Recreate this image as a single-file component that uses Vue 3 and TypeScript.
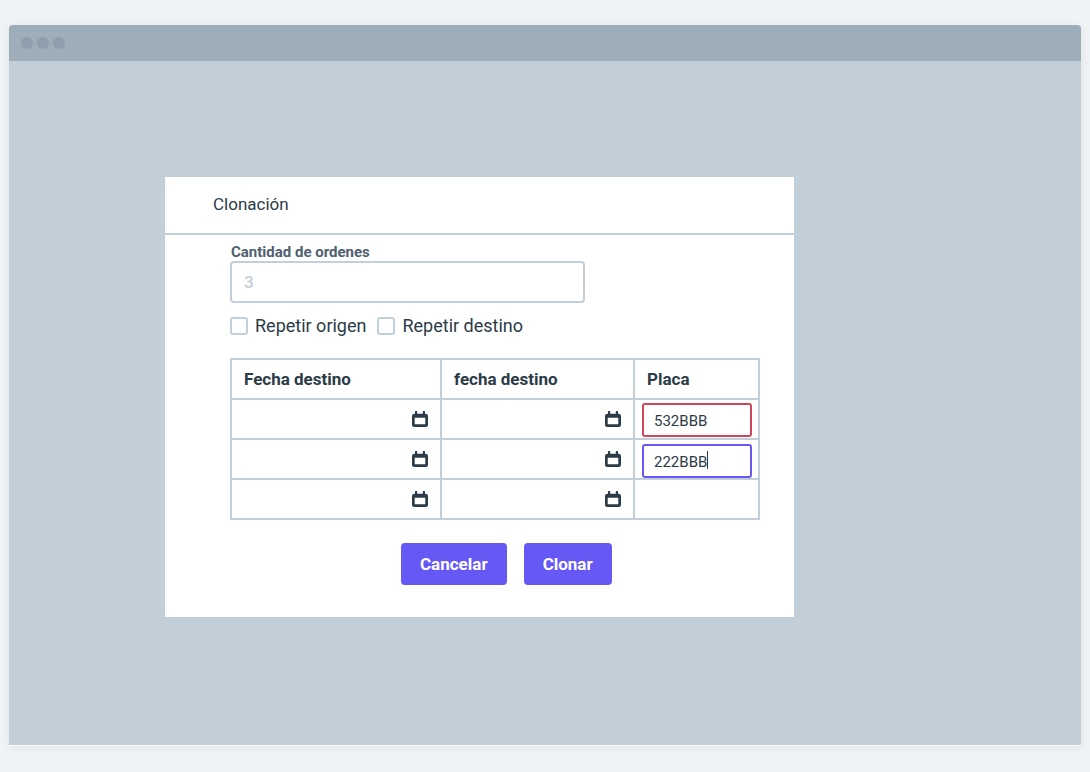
<script setup lang="ts">
import { ref } from 'vue'

interface OrderRow {
  id: number
  origin: string
  destination: string
  plate: string
  state: 'error' | 'active' | 'plain'
}

const quantity = ref('')
const repeatOrigin = ref(false)
const repeatDestination = ref(false)
const rows = ref<OrderRow[]>([
  { id: 1, origin: '', destination: '', plate: '532BBB', state: 'error' },
  { id: 2, origin: '', destination: '', plate: '222BBB', state: 'active' },
  { id: 3, origin: '', destination: '', plate: '', state: 'plain' },
])
const dateFields = ['origin', 'destination'] as const
</script>

<template>
  <div class="page">
    <div class="window">
      <div class="titlebar">
        <span class="dot"></span>
        <span class="dot"></span>
        <span class="dot"></span>
      </div>
      <main class="canvas">
        <section class="dialog" role="dialog" aria-labelledby="dialog-title">
          <header class="dialog-header">
            <h1 id="dialog-title">Clonación</h1>
          </header>
          <form class="dialog-body" @submit.prevent>
            <label class="field-label" for="quantity">Cantidad de ordenes</label>
            <input id="quantity" v-model="quantity" class="quantity" type="text" placeholder="3" />

            <div class="checks">
              <label class="check"><input v-model="repeatOrigin" type="checkbox" />Repetir origen</label>
              <label class="check"><input v-model="repeatDestination" type="checkbox" />Repetir destino</label>
            </div>

            <table class="orders">
              <colgroup>
                <col class="col-origin" />
                <col class="col-destination" />
                <col class="col-plate" />
              </colgroup>
              <thead>
                <tr>
                  <th scope="col">Fecha destino</th>
                  <th scope="col">fecha destino</th>
                  <th scope="col">Placa</th>
                </tr>
              </thead>
              <tbody>
                <tr v-for="row in rows" :key="row.id">
                  <td v-for="field in dateFields" :key="field">
                    <div class="date-cell">
                      <input v-model="row[field]" type="text" :aria-label="`Fecha destino ${row.id}`" />
                      <button type="button" class="calendar" aria-label="Elegir fecha">
                        <svg viewBox="0 0 16 16" width="16" height="16" aria-hidden="true">
                          <path
                            fill="currentColor"
                            fill-rule="evenodd"
                            d="M3 .6Q3 0 3.600 0h1Q5.200 0 5.200 .6V2.800h5.600V.6Q10.800 0 11.400 0h1Q13 0 13 .6V2.800h.5A2.500 2.500 0 0 1 16 5.300v8.200A2.500 2.500 0 0 1 13.500 16h-11A2.500 2.500 0 0 1 0 13.500V5.300A2.500 2.500 0 0 1 2.500 2.800H3zM2.700 6.700v6.500h10.600V6.700z"
                          />
                        </svg>
                      </button>
                    </div>
                  </td>
                  <td>
                    <div class="plate-cell" :class="row.state">
                      <input v-model="row.plate" type="text" :aria-label="`Placa ${row.id}`" />
                      <span v-if="row.state === 'active'" class="caret">{{ row.plate }}</span>
                    </div>
                  </td>
                </tr>
              </tbody>
            </table>

            <div class="actions">
              <button type="button" class="primary">Cancelar</button>
              <button type="submit" class="primary">Clonar</button>
            </div>
          </form>
        </section>
      </main>
    </div>
  </div>
</template>

<style>
body {
  margin: 0;
  background: #eff3f6;
}
</style>

<style scoped>
.page,
.page * {
  box-sizing: border-box;
}

.page {
  display: flex;
  min-height: 100vh;
  padding: 25px 9px 27px;
  background: #eff3f6;
  color: #2c3b48;
  font-family: Roboto, "Liberation Sans", sans-serif;
  font-size: 17px;
  line-height: 20px;
}

input,
button {
  font: inherit;
  color: inherit;
}

.window {
  display: flex;
  flex: 1;
  flex-direction: column;
  border-radius: 4px 4px 0 0;
  background: #c3cfd8;
  box-shadow: 0 1px 0 #f8fafb, 0 2px 10px rgba(0, 0, 0, 0.07);
}

.titlebar {
  display: flex;
  align-items: center;
  gap: 4px;
  height: 36px;
  padding-left: 12px;
  border-radius: 4px 4px 0 0;
  background: #9dadb9;
}

.dot {
  width: 12px;
  height: 12px;
  border-radius: 50%;
  background: #8e9eac;
}

.canvas {
  flex: 1;
  padding: 116px 16px 32px 156px;
}

.dialog {
  max-width: 629px;
  background: #fff;
}

.dialog-header {
  padding: 17px 48px 19px;
  border-bottom: 2px solid #c3cfd8;
}

h1 {
  margin: 0;
  font-size: 17px;
  font-weight: 400;
}

.dialog-body {
  padding: 8px 34px 32px 65px;
}

.field-label {
  display: block;
  padding-left: 1px;
  color: #4f6070;
  font-size: 15px;
  font-weight: 700;
  line-height: 18px;
}

.quantity {
  display: block;
  width: 67%;
  height: 42px;
  padding: 0 12px;
  border: 2px solid #c3cfd8;
  border-radius: 4px;
  background: #fff;
  outline: none;
}

.quantity::placeholder {
  color: #c3cfd8;
  font-weight: 500;
  opacity: 1;
}

.checks {
  display: flex;
  gap: 11px;
  margin: 13px 0 22px;
  font-size: 18px;
}

.check {
  display: flex;
  align-items: center;
  gap: 7px;
}

.check input {
  width: 18px;
  height: 18px;
  margin: 0;
  border: 2px solid #c3cfd8;
  border-radius: 3px;
  appearance: none;
  background: #fff;
}

.check input:checked {
  background: #6558f5;
}

.orders {
  width: 100%;
  border-collapse: collapse;
  table-layout: fixed;
}

.col-destination {
  width: 193px;
}

.col-plate {
  width: 125px;
}

th,
td {
  height: 40px;
  padding: 0;
  border: 2px solid #c3cfd8;
}

th {
  padding: 0 12px;
  font-weight: 700;
  text-align: left;
}

.date-cell {
  display: flex;
  align-items: center;
  height: 38px;
  padding: 0 12px;
}

.date-cell input {
  flex: 1;
  min-width: 0;
  padding: 0;
  border: 0;
  background: none;
  outline: none;
}

.calendar {
  display: flex;
  padding: 0;
  border: 0;
  background: none;
}

.plate-cell {
  position: relative;
  height: 38px;
  padding: 3px 6px 0 7px;
}

.plate-cell input {
  display: block;
  width: 100%;
  height: 34px;
  padding: 2px 10px 0;
  border: 2px solid transparent;
  border-radius: 3px;
  background: none;
  outline: none;
  font-size: 15px;
}

.error input {
  border-color: #d0445c;
}

.active {
  padding-top: 4px;
}

.active input {
  border-color: #6558f5;
}

/* Insertion point placed after the typed text of the active field. */
.caret {
  position: absolute;
  top: 11px;
  left: 19px;
  height: 18px;
  border-right: 1px solid #2c3b48;
  color: transparent;
  font-size: 15px;
  pointer-events: none;
}

.actions {
  display: flex;
  gap: 17px;
  margin-top: 23px;
  padding-left: 171px;
}

.primary {
  height: 42px;
  padding: 0 19px;
  border: 0;
  border-radius: 4px;
  background: #6558f5;
  color: #fff;
  font-weight: 700;
}
</style>
